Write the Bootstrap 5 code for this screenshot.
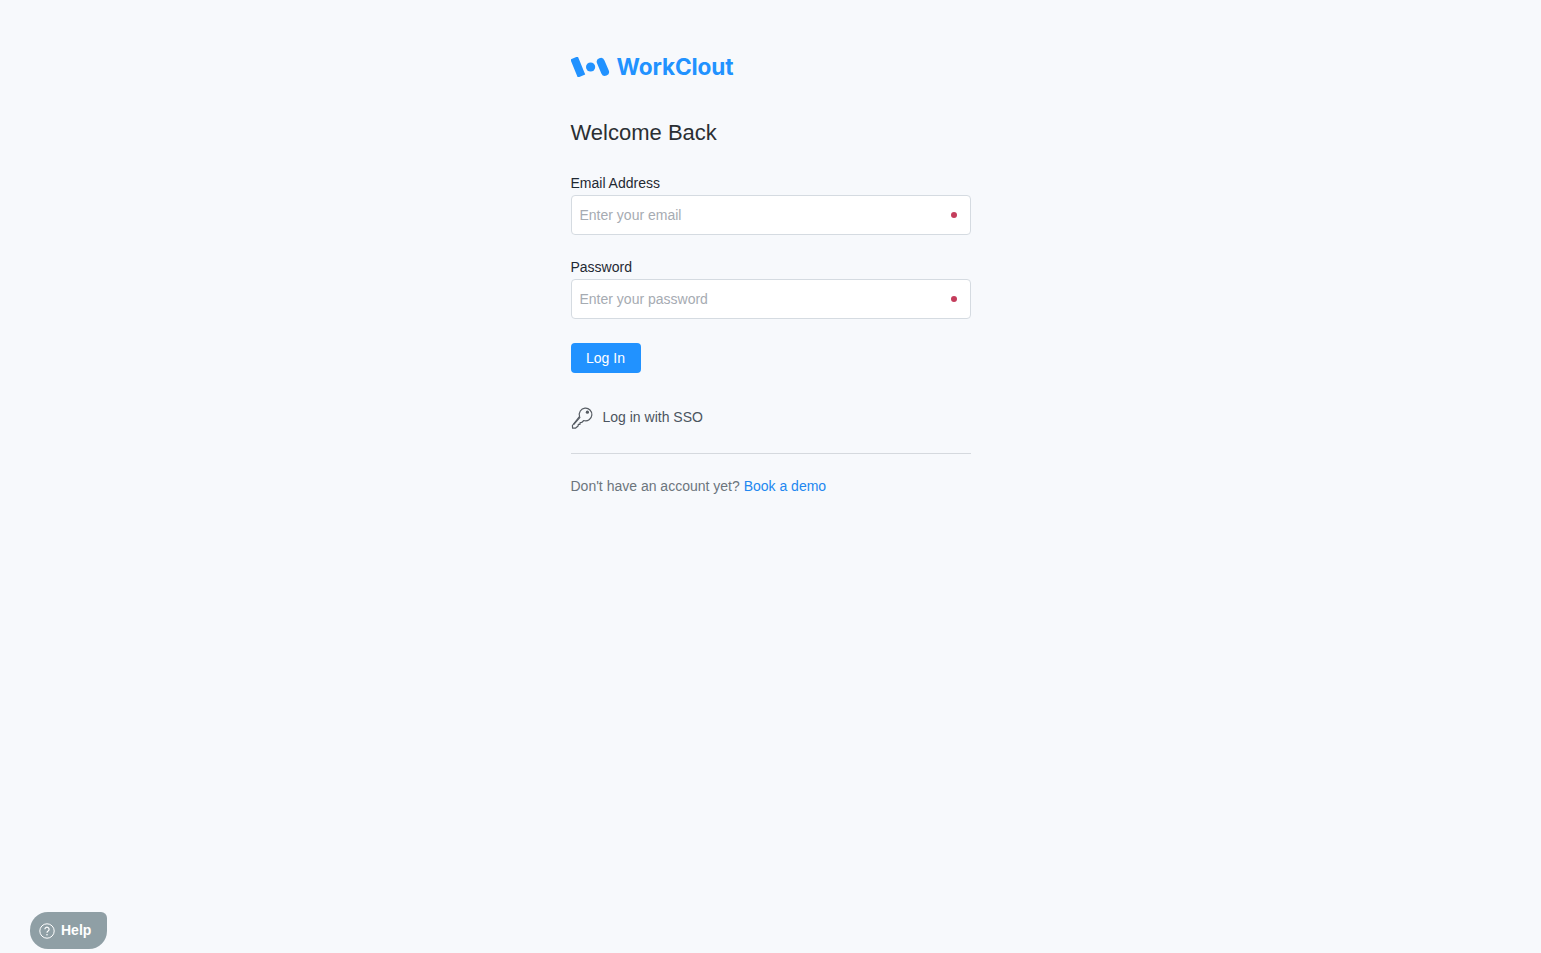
<!DOCTYPE html>
<html lang="en">
<head>
<meta charset="utf-8">
<title>WorkClout - Log In</title>
<link href="https://cdn.jsdelivr.net/npm/bootstrap@5.3.0/dist/css/bootstrap.min.css" rel="stylesheet">
<style>
html,body{height:100%}
body{background:#f7f9fc;font-family:"Liberation Sans",Arial,sans-serif;font-size:14px;color:#2b2f33}
.wc-panel{width:400px;padding-top:55px}
.wc-logo{height:24px;margin-bottom:41px;color:#2192ff}
.wc-wordmark{font-family:Inter,sans-serif;font-weight:700;font-size:22.6px;line-height:24px;letter-spacing:-.1px;margin-left:7px}
.wc-title{font-size:22px;line-height:26px;font-weight:400;color:#2b2f33;margin-bottom:29px}
.wc-label{font-size:14px;line-height:16px;color:#1f2933;margin-bottom:4px;display:block}
.wc-field{margin-bottom:24px}
.wc-input{height:40px;border:1px solid #d5dbe1;border-radius:4px;padding:0 8px;font-size:14px;background:#fff;color:#2b2f33}
.wc-input::placeholder{color:#a6abb2;opacity:1}
.wc-dot{width:6px;height:6px;border-radius:50%;background:#c43d5c;top:17px;right:14px}
.wc-btn{width:70px;height:30px;padding:0;background:#2192ff;border:0;border-radius:4px;color:#fff;font-size:14px;line-height:30px}
.wc-sso{margin-top:32px;color:#4b5560;height:24px;gap:9px;text-decoration:none}
.wc-sep{margin:24px 0 24px;border-color:#d5d9de;opacity:1}
.wc-foot{color:#6c757d;line-height:18px;margin-top:-1px}
.wc-foot a{color:#2187f0;text-decoration:none}
.wc-help{position:fixed;left:30px;top:912px;width:77px;height:37px;background:#8f9fa5;color:#fff;font-weight:700;font-size:14px;gap:6px;padding-left:9px;border-radius:18px 6px 18px 18px}
</style>
</head>
<body>
<main class="wc-panel mx-auto">
  <div class="wc-logo d-flex align-items-center">
    <svg width="39" height="20" viewBox="0 0 39 20" aria-hidden="true">
      <line x1="4.6" y1="4.6" x2="9" y2="15.4" stroke="#2192ff" stroke-width="8" stroke-linecap="square"/>
      <circle cx="19.6" cy="10" r="4.6" fill="#2192ff"/>
      <line x1="29.8" y1="5" x2="34" y2="14.8" stroke="#2192ff" stroke-width="8" stroke-linecap="round"/>
    </svg>
    <span class="wc-wordmark">WorkClout</span>
  </div>
  <h1 class="wc-title">Welcome Back</h1>
  <form>
    <div class="wc-field">
      <label class="wc-label" for="em">Email Address</label>
      <div class="position-relative">
        <input id="em" type="email" class="form-control wc-input" placeholder="Enter your email">
        <span class="wc-dot position-absolute"></span>
      </div>
    </div>
    <div class="wc-field">
      <label class="wc-label" for="pw">Password</label>
      <div class="position-relative">
        <input id="pw" type="password" class="form-control wc-input" placeholder="Enter your password">
        <span class="wc-dot position-absolute"></span>
      </div>
    </div>
    <button type="button" class="btn wc-btn d-block">Log In</button>
  </form>
  <a href="#" class="wc-sso d-flex align-items-center">
    <svg width="23" height="23" viewBox="0 0 23 23" fill="none" stroke="#555b62" stroke-width="1.2" stroke-linejoin="round" aria-hidden="true">
      <path d="M8.6 10.4a6.3 6.3 0 1 1 4.2 4.1l-2.1 2-1.6.1-.1 1.7-1.7.1-.2 1.6-2.7 2.2-2.8-.1-.2-2.6z"/>
      <path d="M9.2 11.2 2.6 18.5"/>
      <circle cx="16.4" cy="6.2" r="1.6" fill="#555b62" stroke="none"/>
    </svg>
    <span>Log in with SSO</span>
  </a>
  <hr class="wc-sep">
  <p class="wc-foot mb-0">Don't have an account yet? <a href="#">Book a demo</a></p>
</main>
<div class="wc-help d-flex align-items-center">
  <svg width="16" height="16" viewBox="0 0 16 16" fill="none" stroke="#fff" aria-hidden="true">
    <circle cx="8" cy="8" r="7.2" stroke-width="1"/>
    <path d="M5.9 6.3a2.1 2.1 0 1 1 3.2 1.8c-.7.4-1.1.8-1.1 1.6" stroke-width="1.2"/>
    <circle cx="8" cy="11.7" r=".8" fill="#fff" stroke="none"/>
  </svg>
  <span>Help</span>
</div>
<script src="https://cdn.jsdelivr.net/npm/bootstrap@5.3.0/dist/js/bootstrap.bundle.min.js"></script>
</body>
</html>
